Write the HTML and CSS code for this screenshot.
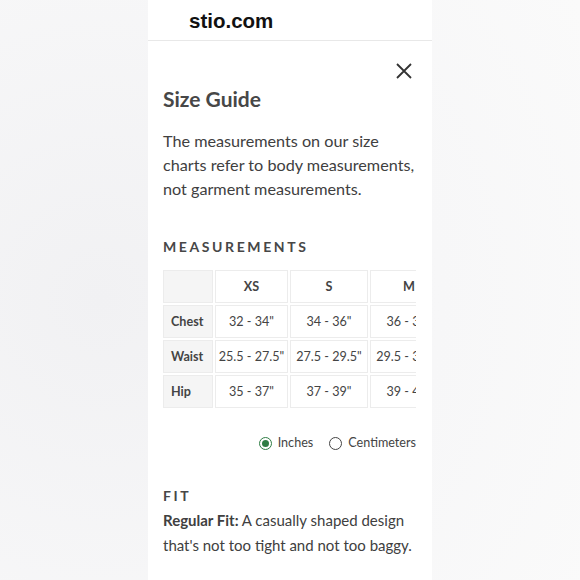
FILE: index.html
```html
<!DOCTYPE html>
<html>
<head>
<meta charset="utf-8">
<link rel="stylesheet" href="styles.css">
</head>
<body>
<div class="panel">
  <header class="site">stio.com</header>
  <main class="content">
    <div class="close-row">
      <svg class="close" width="16" height="16" viewBox="0 0 16 16"><path d="M1 1L15 15M15 1L1 15" stroke="#333" stroke-width="1.8" fill="none"/></svg>
    </div>
    <h1 class="title">Size Guide</h1>
    <p class="intro">The measurements on our size charts refer to body measurements, not garment measurements.</p>
    <h2 class="label">MEASUREMENTS</h2>
    <div class="table-wrap">
      <table class="sizes">
        <colgroup><col class="c-label"><col class="c-xs"><col class="c-s"><col class="c-m"></colgroup>
        <tr><th class="corner"></th><th>XS</th><th>S</th><th>M</th></tr>
        <tr><th class="row">Chest</th><td>32 - 34"</td><td>34 - 36"</td><td>36 - 38"</td></tr>
        <tr><th class="row">Waist</th><td>25.5 - 27.5"</td><td>27.5 - 29.5"</td><td>29.5 - 31.5"</td></tr>
        <tr><th class="row">Hip</th><td>35 - 37"</td><td>37 - 39"</td><td>39 - 41"</td></tr>
      </table>
    </div>
    <div class="units">
      <span class="opt"><span class="radio on"></span>Inches</span>
      <span class="opt"><span class="radio"></span>Centimeters</span>
    </div>
    <h2 class="label fit">FIT</h2>
    <p class="fit-text"><b>Regular Fit:</b> A casually shaped design that's not too tight and not too baggy.</p>
  </main>
</div>
</body>
</html>
```
FILE: styles.css
```css
html, body { margin: 0; padding: 0; }
body {
  width: 580px;
  height: 580px;
  overflow: hidden;
  background: radial-gradient(circle at 100px 300px, #f1f1f3 0%, #f7f7f8 60%, #fafafa 100%);
  display: flex;
  justify-content: center;
  font-family: Lato, "Noto Sans", sans-serif;
  color: #404040;
}
.panel {
  width: 284px;
  background: #fff;
  height: 580px;
}
.site {
  height: 41px;
  box-sizing: border-box;
  padding-left: 41px;
  padding-top: 9px;
  font-family: "Liberation Sans", Arial, sans-serif;
  font-weight: bold;
  font-size: 20.5px;
  line-height: 24px;
  color: #111;
  border-bottom: 1px solid #e8e8e8;
}
.content {
  padding: 0 16px 0 15px;
}
.close-row {
  display: flex;
  justify-content: flex-end;
  padding-top: 22px;
  padding-right: 4px;
  height: 16px;
}
.title {
  margin: 6px 0 0;
  font-size: 21px;
  line-height: 28px;
  font-weight: 700;
  color: #474747;
}
.intro {
  margin: 16px 0 0;
  font-size: 16.2px;
  line-height: 24px;
  color: #404040;
}
.label {
  margin: 36px 0 0;
  font-size: 14px;
  line-height: 20px;
  letter-spacing: 2.6px;
  font-weight: 700;
  color: #474747;
}
.table-wrap {
  margin-top: 11px;
  width: 253px;
  overflow: hidden;
}
.sizes {
  border-collapse: separate;
  border-spacing: 2px;
  margin-left: -2px;
  table-layout: fixed;
  width: 289px;
  font-size: 12.6px;
  color: #444;
}
.c-label { width: 50px; }
.c-xs { width: 73px; }
.c-s { width: 78px; }
.c-m { width: 78px; }
.sizes th, .sizes td {
  border: 1px solid #ececec;
  height: 31px;
  padding: 0;
  text-align: center;
  white-space: nowrap;
  overflow: hidden;
  font-weight: normal;
}
.sizes tr:first-child th { font-weight: 700; }
.sizes th.corner, .sizes th.row {
  background: #f5f5f5;
}
.sizes th.row {
  text-align: left;
  padding-left: 7px;
  font-weight: 700;
}
.units {
  margin-top: 23px;
  display: flex;
  justify-content: flex-end;
  gap: 16px;
  font-size: 12.6px;
  line-height: 20px;
  color: #444;
}
.opt { display: flex; align-items: center; gap: 6px; }
.radio {
  width: 11px;
  height: 11px;
  border: 1.5px solid #444;
  border-radius: 50%;
  box-sizing: content-box;
  position: relative;
}
.radio.on { border-color: #2f7d45; }
.radio.on::after {
  content: "";
  position: absolute;
  left: 2px; top: 2px;
  width: 7px; height: 7px;
  border-radius: 50%;
  background: #2f7d45;
}
.label.fit { margin-top: 33px; }
.fit-text {
  margin: 2px 0 0;
  font-size: 15px;
  line-height: 25px;
  color: #404040;
}
.fit-text b { font-weight: 700; }
```
